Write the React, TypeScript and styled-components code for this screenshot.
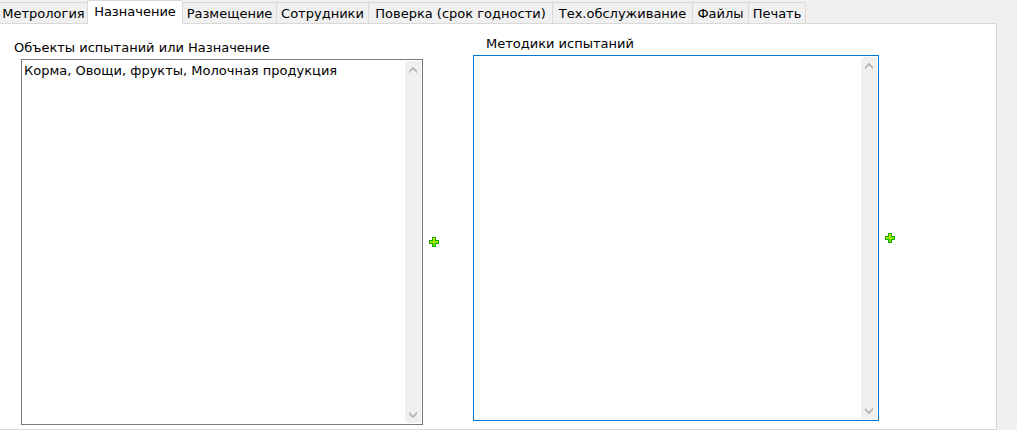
import React, { useRef, useState } from "react";
import styled, { createGlobalStyle } from "styled-components";

const GlobalStyle = createGlobalStyle`
  * { box-sizing: border-box; }
  body {
    margin: 0;
    background: #f0f0f0;
    color: #000;
    font: 13px/16px Verdana, "DejaVu Sans", sans-serif;
  }
`;

const Page = styled.main`
  padding-right: 20px;
`;

const TabList = styled.div`
  display: flex;
  align-items: flex-end;
  height: 23px;
`;

const Tab = styled.button<{ $active: boolean; $width: number }>`
  display: flex;
  flex: none;
  align-items: center;
  justify-content: center;
  width: ${(p) => p.$width}px;
  height: ${(p) => (p.$active ? 24 : 21)}px;
  margin: 0 0 ${(p) => (p.$active ? -1 : 0)}px;
  padding: ${(p) => (p.$active ? "0 0 1px" : "1px 0 0")};
  border: solid #d9d9d9;
  border-width: 1px 0 0 1px;
  background: ${(p) => (p.$active ? "#fff" : "#f0f0f0")};
  color: inherit;
  font: inherit;
  white-space: nowrap;

  &:first-child {
    border-left: 0;
  }

  &:last-child {
    border-right-width: 1px;
  }
`;

const Panel = styled.section`
  display: grid;
  grid-template-columns: 431fr 428fr;
  align-items: start;
  gap: 28px;
  padding: 11px 95px 4px 14px;
  border: solid #d9d9d9;
  border-width: 1px 1px 1px 0;
  background: #fff;
`;

const Group = styled.div<{ $lowered?: boolean }>`
  padding-top: ${(p) => (p.$lowered ? 4 : 0)}px;
  min-width: 0;
`;

const Caption = styled.label<{ $indent: number }>`
  display: block;
  height: 20px;
  padding-top: 1px;
  padding-left: ${(p) => p.$indent}px;
  white-space: nowrap;
`;

const FieldRow = styled.div<{ $indent: number }>`
  display: flex;
  align-items: center;
  padding-left: ${(p) => p.$indent}px;
`;

const Memo = styled.div<{ $focused: boolean }>`
  display: flex;
  flex: 1;
  min-width: 0;
  height: 366px;
  padding: 1px;
  border: 1px solid ${(p) => (p.$focused ? "#0078d7" : "#7a7a7a")};
  background: #fff;
`;

const MemoText = styled.textarea`
  flex: 1;
  min-width: 0;
  margin: 0;
  padding: 2px 1px;
  border: 0;
  outline: 0;
  resize: none;
  overflow: hidden;
  background: transparent;
  color: inherit;
  font: inherit;
`;

const ScrollBar = styled.div`
  display: flex;
  flex-direction: column;
  justify-content: space-between;
  width: 16px;
  background: #f0f0f0;
`;

const ScrollButton = styled.button`
  display: grid;
  place-items: center;
  height: 17px;
  padding: 0;
  border: 0;
  background: transparent;
`;

const AddButton = styled.button`
  display: grid;
  place-items: center;
  width: 22px;
  height: 22px;
  padding: 0;
  border: 0;
  background: transparent;
`;

const Chevron = ({ down = false }: { down?: boolean }) => (
  <svg width="8" height="6" viewBox="0 0 8 6" aria-hidden="true">
    <path
      d={down ? "M0 0 4 4 8 0V2L4 6 0 2Z" : "M0 6 4 2 8 6V4L4 0 0 4Z"}
      fill="#b4b4b4"
      stroke="#b4b4b4"
      strokeWidth="0.5"
    />
  </svg>
);

const Plus = () => (
  <svg width="10" height="10" viewBox="0 0 10 10" aria-hidden="true">
    <defs>
      <linearGradient id="plusFill" x1="0" y1="0" x2="0" y2="1">
        <stop offset="0" stopColor="#d8f000" />
        <stop offset="1" stopColor="#50e000" />
      </linearGradient>
    </defs>
    <path d="M3 0H7V3H10V7H7V10H3V7H0V3H3Z" fill="#18a808" />
    <path d="M4 1H6V4H9V6H6V9H4V6H1V4H4Z" fill="url(#plusFill)" />
  </svg>
);

interface MemoFieldProps {
  id: string;
  caption: string;
  value?: string;
  focused?: boolean;
  lowered?: boolean;
  captionIndent?: number;
  fieldIndent?: number;
}

function MemoField({
  id,
  caption,
  value = "",
  focused = false,
  lowered,
  captionIndent = 0,
  fieldIndent = 0,
}: MemoFieldProps) {
  const text = useRef<HTMLTextAreaElement>(null);
  const scroll = (top: number) => text.current?.scrollBy({ top });
  return (
    <Group $lowered={lowered}>
      <Caption htmlFor={id} $indent={captionIndent}>{caption}</Caption>
      <FieldRow $indent={fieldIndent}>
        <Memo $focused={focused}>
          <MemoText id={id} ref={text} defaultValue={value} spellCheck={false} />
          <ScrollBar>
            <ScrollButton type="button" aria-label="Вверх" onClick={() => scroll(-16)}>
              <Chevron />
            </ScrollButton>
            <ScrollButton type="button" aria-label="Вниз" onClick={() => scroll(16)}>
              <Chevron down />
            </ScrollButton>
          </ScrollBar>
        </Memo>
        <AddButton type="button" aria-label="Добавить">
          <Plus />
        </AddButton>
      </FieldRow>
    </Group>
  );
}

const tabs = [
  { name: "Метрология", width: 87 },
  { name: "Назначение", width: 95 },
  { name: "Размещение", width: 94 },
  { name: "Сотрудники", width: 92 },
  { name: "Поверка (срок годности)", width: 184 },
  { name: "Тех.обслуживание", width: 140 },
  { name: "Файлы", width: 56 },
  { name: "Печать", width: 58 },
];

export default function App() {
  const [active, setActive] = useState(1);
  return (
    <Page>
      <GlobalStyle />
      <TabList role="tablist">
        {tabs.map(({ name, width }, i) => (
          <Tab
            key={name}
            type="button"
            role="tab"
            aria-selected={i === active}
            $active={i === active}
            $width={width}
            onClick={() => setActive(i)}
          >
            {name}
          </Tab>
        ))}
      </TabList>
      <Panel role="tabpanel">
        <MemoField
          id="objects"
          caption="Объекты испытаний или Назначение"
          value="Корма, Овощи, фрукты, Молочная продукция"
          lowered
          fieldIndent={7}
        />
        <MemoField id="methods" caption="Методики испытаний" focused captionIndent={13} />
      </Panel>
    </Page>
  );
}
